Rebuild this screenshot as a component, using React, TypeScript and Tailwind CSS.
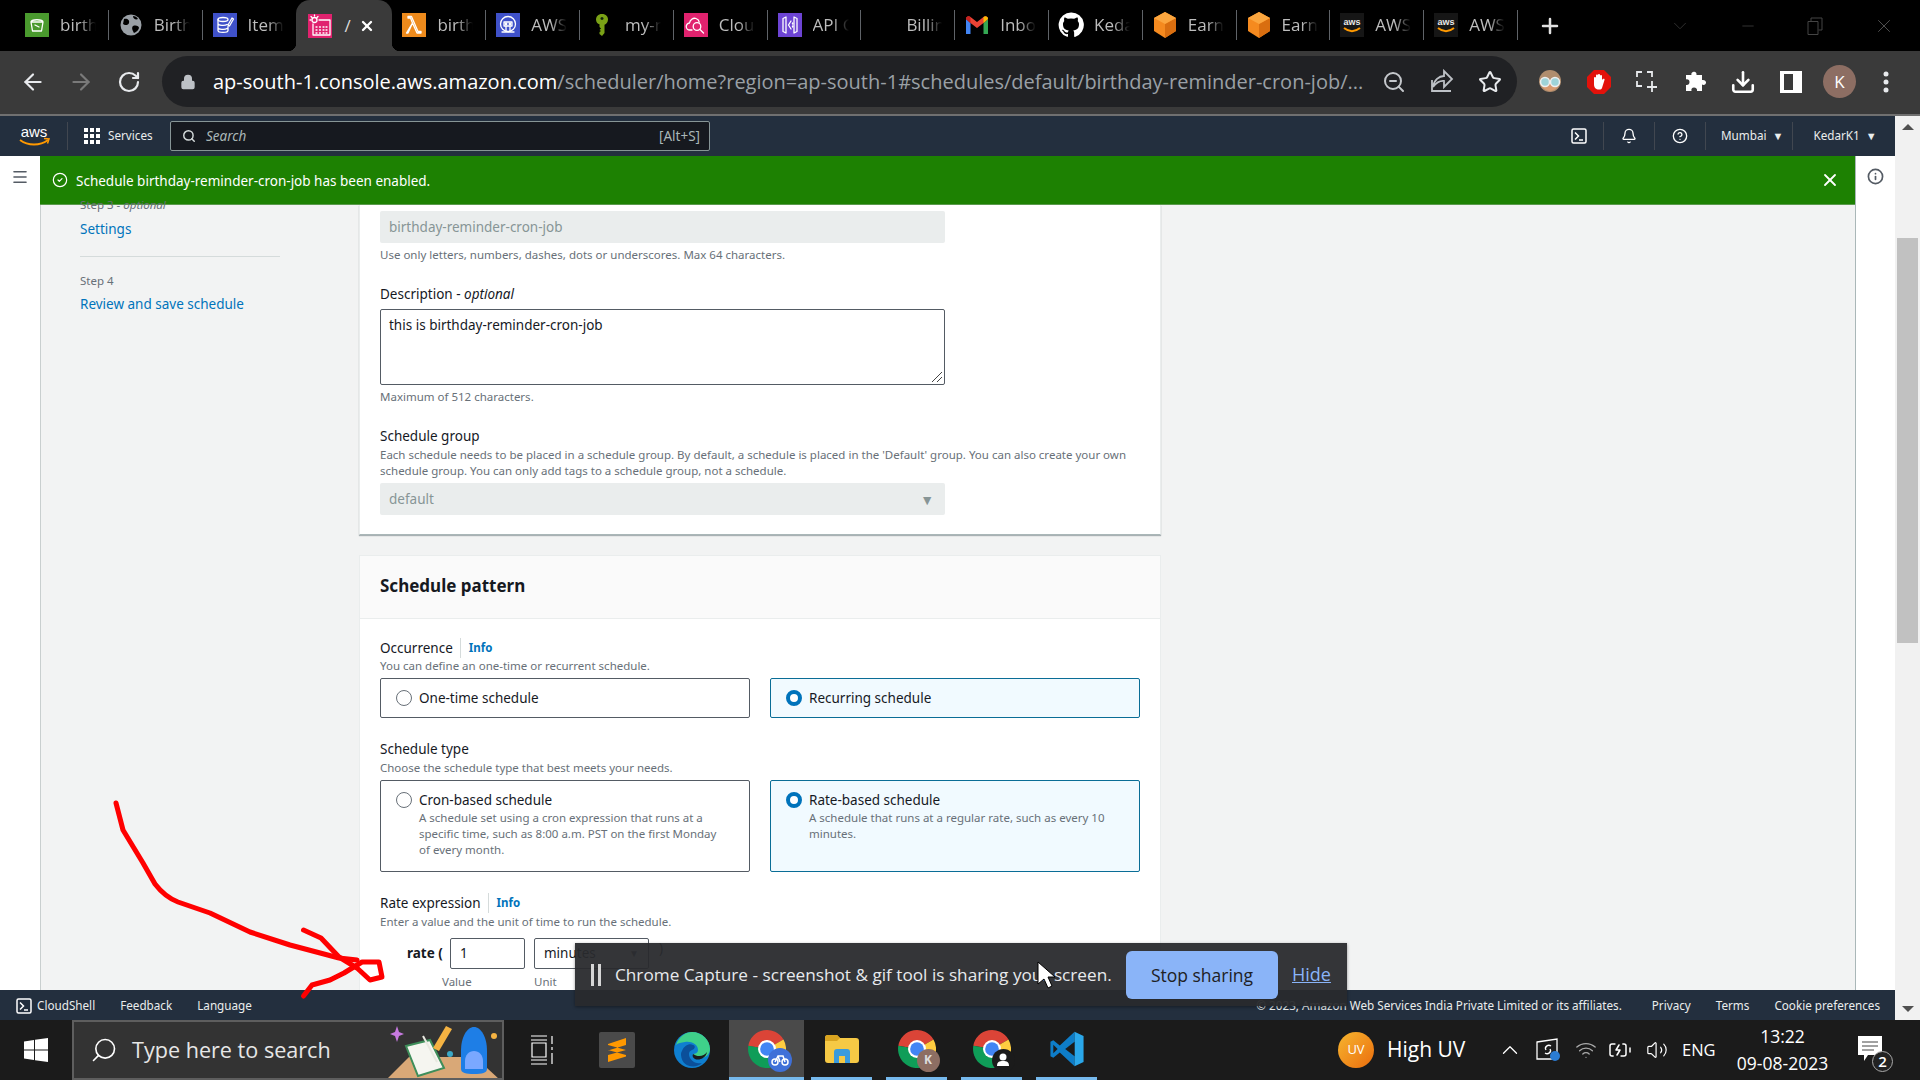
import React from "react";
import { ArrowLeft, ArrowRight, RotateCw, Lock, ZoomOut, Star, Download, X, Plus, ChevronDown, Minus, Search, Menu, CircleCheck, Info, Bell, CircleHelp, ChevronUp, Wifi, Volume2, BatteryCharging } from "lucide-react";

const CHROME = "font-['Open_Sans',sans-serif]";
const AWS = "font-['Noto_Sans',sans-serif]";

function Box({ bg, children }: { bg: string; children: React.ReactNode }) {
  return (
    <svg width="24" height="24" viewBox="0 0 24 24" className="shrink-0">
      <rect width="24" height="24" fill={bg} />
      <g fill="none" stroke="#fff" strokeWidth="1.3" strokeLinecap="round" strokeLinejoin="round">{children}</g>
    </svg>
  );
}

const S3 = () => (
  <Box bg="#4a9a2e">
    <path d="M6 9h12l-1.5 9h-9zM6 9c0-3 12-3 12 0M10 12l4 2" />
  </Box>
);
const Globe = () => (
  <svg width="24" height="24" viewBox="0 0 24 24" className="shrink-0">
    <circle cx="12" cy="12" r="10.5" fill="#9aa0a6" />
    <path d="M5 6c3-1 6 1 5 4s-5 2-6 1zM14 13c3-1 6 0 6 2-1 3-3 4-5 5-1-2-3-5-1-7zM14 3c2 0 4 1 5 3-2 1-5 0-5-3z" fill="#000" />
  </svg>
);
const Dynamo = () => (
  <Box bg="#3f51c9">
    <ellipse cx="10" cy="6.5" rx="5" ry="2" />
    <path d="M5 6.5v11c0 2.5 10 2.5 10 0v-4M5 10.5c0 2 7 2.500 9 1M5 14.500c0 2 7 2.500 9 1M15 12l4-7 1.500 1-4 7z" />
  </Box>
);
const EventB = () => (
  <Box bg="#e0226e">
    <circle cx="6.500" cy="6" r="2.500" />
    <path d="M6.500 1v1M2 6h1M3 2.500l1 1M10 2.500l-1 1M11 6h11v15H5v-11" />
    <path d="M8 13h1M11.500 13h1M15 13h1M18 13h1M8 16h1M11.500 16h1M15 16h1M18 16h1M8 19h1M11.500 19h1M15 19h1M18 19h1" />
  </Box>
);
const Lambda = () => (
  <Box bg="#ed8a1c">
    <path d="M4.500 20l6-10-2-5H6V3.500h3.500l6.500 15h3V20h-4l-4.500-10-4.500 10z" />
  </Box>
);
const AwsNet = () => (
  <Box bg="#3f51c9">
    <circle cx="12" cy="11" r="7.500" />
    <path d="M8 9h8v4H8zM10 13v5M14 13v5M6 19h12" />
    <circle cx="10" cy="11" r=".8" />
    <circle cx="14" cy="11" r=".8" />
  </Box>
);
const Key = () => (
  <svg width="24" height="24" viewBox="0 0 24 24" className="shrink-0">
    <path d="M12 1c4 0 6 2.500 6 5.500 0 2.500-1.500 4.500-3.500 5.200V20l-2.500 3-2.500-2v-2l1.500-1-1.500-1 1.500-1.500-1.500-1.500v-2.800C7.500 11 6 9 6 6.500 6 3.500 8 1 12 1z" fill="#7aa116" />
    <path d="M10.500 5.500h3M12 4v3" stroke="#10240a" strokeWidth="1.400" />
  </svg>
);
const Cloud = () => (
  <Box bg="#e0226e">
    <path d="M8 17H6a3.500 3.500 0 0 1-.5-7C6 7 9 4.500 12 5.500c2 .7 3 2 3.200 3.500" />
    <circle cx="13" cy="13.500" r="3.800" />
    <path d="M16 16.500l3.500 3.500" />
  </Box>
);
const Api = () => (
  <Box bg="#6d44d4">
    <path d="M5 5.500l3-1.500v16l-3-1.500zM19 5.500l-3-1.500v16l3-1.500zM13 8l-2.500 4 2.500 4M14.500 10v1M14.500 13v1" />
  </Box>
);
const Gmail = () => (
  <svg width="24" height="24" viewBox="0 0 24 24" className="shrink-0">
    <path d="M1 6v15h4.500V10z" fill="#4285f4" />
    <path d="M23 6v15h-4.500V10z" fill="#34a853" />
    <path d="M1 6c0-3 3-3.500 4.500-2L12 9l6.500-5c1.500-1.500 4.500-1 4.500 2l-4.500 4L12 15 5.500 10z" fill="#ea4335" />
    <path d="M18.500 4c1.500-1.500 4.500-1 4.500 2l-4.500 4z" fill="#fbbc04" />
    <path d="M1 6c0-3 3-3.500 4.500-2v6z" fill="#c5221f" />
  </svg>
);
const GitHub = () => (
  <svg width="26" height="26" viewBox="0 0 24 24" className="shrink-0" fill="#fff">
    <path d="M12 .5A11.500 11.500 0 0 0 8.400 22.900c.6.100.8-.2.800-.6v-2c-3.200.7-3.900-1.500-3.900-1.500-.5-1.300-1.300-1.700-1.300-1.700-1-.7.100-.7.100-.7 1.200.1 1.800 1.200 1.800 1.200 1 1.800 2.700 1.300 3.300 1 .1-.8.400-1.300.7-1.600-2.600-.3-5.300-1.300-5.300-5.700 0-1.300.5-2.300 1.200-3.100-.1-.3-.5-1.500.1-3.100 0 0 1-.3 3.200 1.200a11 11 0 0 1 5.800 0c2.200-1.500 3.200-1.200 3.200-1.200.6 1.600.2 2.800.1 3.100.7.800 1.200 1.800 1.200 3.100 0 4.400-2.700 5.400-5.300 5.700.4.400.8 1.100.8 2.200v3.200c0 .3.200.7.800.6A11.500 11.500 0 0 0 12 .5z" />
  </svg>
);
const Hex = () => (
  <svg width="24" height="26" viewBox="0 0 24 26" className="shrink-0">
    <path d="M12 0l11 6v13l-11 7-11-7V6z" fill="#f58a1f" />
    <path d="M12 12l11-6v13l-11 7z" fill="#d96e10" />
    <path d="M12 0l11 6-11 6L1 6z" fill="#fba63f" />
  </svg>
);
const AwsFav = () => (
  <svg width="24" height="24" viewBox="0 0 24 24" className="shrink-0">
    <rect width="24" height="24" fill="#161616" />
    <text x="12" y="12" textAnchor="middle" fontSize="9" fontWeight="700" fill="#e8e8e8" fontFamily="Liberation Sans">aws</text>
    <path d="M4 15c5 4 11 4 16 0" stroke="#f90" strokeWidth="2" fill="none" />
  </svg>
);

const tabs: { icon: React.ReactNode; t: string; active?: boolean }[] = [
  { icon: <S3 />, t: "birthday" },
  { icon: <Globe />, t: "Birthday" },
  { icon: <Dynamo />, t: "Items" },
  { icon: <EventB />, t: "Amazon", active: true },
  { icon: <Lambda />, t: "birthday" },
  { icon: <AwsNet />, t: "AWS" },
  { icon: <Key />, t: "my-new" },
  { icon: <Cloud />, t: "Cloud" },
  { icon: <Api />, t: "API G" },
  { icon: <span className="w-6 shrink-0" />, t: "Billing" },
  { icon: <Gmail />, t: "Inbox" },
  { icon: <GitHub />, t: "Kedar" },
  { icon: <Hex />, t: "Earn" },
  { icon: <Hex />, t: "Earn" },
  { icon: <AwsFav />, t: "AWS" },
  { icon: <AwsFav />, t: "AWS" },
];

function Tab({ icon, t, active, hideSep }: { icon: React.ReactNode; t: string; active?: boolean; hideSep?: boolean }) {
  if (active)
    return (
      <div className="relative flex h-full w-[96px] shrink-0 items-center rounded-t-[14px] bg-[#3a3a3a] pl-[12px]">
        <div className="absolute bottom-0 left-[-8px] h-[8px] w-[8px] bg-[radial-gradient(circle_at_0_0,transparent_8px,#3a3a3a_8.5px)]" />
        <div className="absolute bottom-0 right-[-8px] h-[8px] w-[8px] bg-[radial-gradient(circle_at_100%_0,transparent_8px,#3a3a3a_8.5px)]" />
        {icon}
        <span className="ml-[12px] w-[7px] overflow-hidden text-[17px] text-[#ddd]">/</span>
        <X size={16} strokeWidth={3.5} className="ml-[8px] text-white" />
      </div>
    );
  return (
    <div className="flex h-full w-[93.8px] shrink-0 items-center pb-[1px] pl-[9px]">
      <span className="flex w-[26px] justify-center">{icon}</span>
      <span className="ml-[10px] w-[36px] overflow-hidden whitespace-nowrap text-[17px] text-[#bdbdbd] [mask-image:linear-gradient(90deg,#000_55%,transparent)]">{t}</span>
      <span className={"ml-auto h-[30px] w-[1px] " + (hideSep ? "" : "bg-[#5f6368]")} />
    </div>
  );
}

function TabStrip() {
  return (
    <div className={"flex h-[51px] shrink-0 items-center bg-black pl-[15px] " + CHROME}>
      {tabs.map((x, i) => (
        <Tab key={i} {...x} hideSep={i === 2} />
      ))}
      <Plus size={24} strokeWidth={2.5} className="ml-[20px] text-[#e0e0e0]" />
      <ChevronDown size={22} strokeWidth={1} className="ml-[107px] text-[#333]" />
      <Minus size={18} strokeWidth={1} className="ml-[48px] text-[#444]" />
      <svg width="16" height="18" viewBox="0 0 16 18" className="ml-[50px]" fill="none" stroke="#444"><path d="M1 4.500h10v13H1zM4 4V1h11v12h-3.500" /></svg>
      <X size={22} strokeWidth={1} className="ml-[50px] text-[#555]" />
    </div>
  );
}

function Toolbar() {
  return (
    <div className={"flex h-[65px] shrink-0 items-center border-b-2 border-[#707070] bg-[#3a3a3a] pb-[2px] " + CHROME}>
      <ArrowLeft size={26} className="ml-[20px] text-[#e8eaed]" />
      <ArrowRight size={26} className="ml-[22px] text-[#7a7a7a]" />
      <RotateCw size={24} strokeWidth={2.2} className="ml-[23px] text-[#e8eaed]" />
      <div className="ml-[21px] flex h-[51px] w-[1355px] items-center rounded-[26px] bg-[#202124]">
        <Lock size={16} fill="#bdc1c6" className="ml-[18px] shrink-0 text-[#bdc1c6]" />
        <div className="ml-[17px] w-[1154px] overflow-hidden whitespace-nowrap pt-[1px] text-[20px] leading-[30px] text-[#9aa0a6]">
          <span className="text-white">ap-south-1.console.aws.amazon.com</span>/scheduler/home?region=ap-south-1#schedules/default/birthday-reminder-cron-job/...
        </div>
        <ZoomOut size={24} className="ml-[15px] shrink-0 text-[#c4c7cb]" />
        <svg width="24" height="26" viewBox="0 0 24 26" fill="none" stroke="#bdc1c6" strokeWidth="1.800" className="ml-[24px] shrink-0">
          <path d="M2 11v11h19M3 18c1-7 6-11 11-11V2l8 8-8 8v-6c-5-.5-8 2-11 6z" />
        </svg>
        <Star size={24} className="ml-[24px] shrink-0 text-[#e8eaed]" />
      </div>
      <svg width="26" height="26" viewBox="0 0 26 26" className="ml-[20px]">
        <circle cx="13" cy="12" r="11" fill="#b08d6d" />
        <path d="M4 15c2 9 16 9 18 0z" fill="#d89a70" />
        <circle cx="8" cy="13" r="4.500" fill="#9fd3d8" stroke="#eee" strokeWidth="1.500" />
        <circle cx="18" cy="13" r="4.500" fill="#9fd3d8" stroke="#eee" strokeWidth="1.500" />
      </svg>
      <svg width="26" height="26" viewBox="0 0 26 26" className="ml-[23px]">
        <path d="M8 1h10l7 7v10l-7 7H8l-7-7V8z" fill="#e3120b" />
        <path d="M8 15V9c0-1.500 2-1.500 2 0V6.500c0-1.500 2-1.500 2 0V6c0-1.500 2-1.500 2 0v1c0-1.500 2-1.500 2 0v4c1-2 3-1.500 2.500 0L16 19c-.5 1-1 1.500-3 1.500-3 0-5-1.500-5-5.500z" fill="#fff" />
      </svg>
      <svg width="22" height="22" viewBox="0 0 22 22" fill="none" stroke="#e8eaed" strokeWidth="1.800" className="ml-[24px]">
        <path d="M1 6V1h5M11 1h5v5M1 10v5h5M16 10v11M11 16h10" />
      </svg>
      <svg width="22" height="22" viewBox="0 0 22 22" fill="#fff" className="ml-[27px]">
        <path d="M8 1c2-1 4 .5 3.500 3H17v5c2.500-.5 4.500 1 4 3s-2.500 2.500-4 1.500V20h-5c.5-2-1-3.500-3-3.500S6 18 6.500 20H1v-6c2 .5 3.500-1 3.500-3S3 8 1 8.500V4h5.500C6 3 6.500 1.500 8 1z" />
      </svg>
      <Download size={26} strokeWidth={2.4} className="ml-[23px] text-white" />
      <svg width="22" height="22" viewBox="0 0 22 22" className="ml-[24px]">
        <path d="M0 0h22v22H0z" fill="#fff" />
        <path d="M4 3h9v16H4z" fill="#3a3a3a" />
      </svg>
      <div className="ml-[21px] flex h-[33px] w-[33px] items-center justify-center rounded-full bg-[#8d6e63] text-[17px] text-white">K</div>
      <svg width="6" height="22" viewBox="0 0 6 22" fill="#e8eaed" className="ml-[27px]">
        <circle cx="3" cy="3" r="2.500" /><circle cx="3" cy="11" r="2.500" /><circle cx="3" cy="19" r="2.500" />
      </svg>
    </div>
  );
}

function Divider() {
  return <span className="block h-[28px] w-[1px] bg-[#414750]" />;
}

function AwsNav() {
  return (
    <div className={"flex h-[40px] shrink-0 items-center bg-[#232f3e] text-[11.7px] text-[#eaeded] " + AWS}>
      <svg width="34" height="24" viewBox="0 0 34 24" className="ml-[17px]">
        <text x="17" y="13" textAnchor="middle" fontSize="15" fill="#fff" fontFamily="Liberation Sans">aws</text>
        <path d="M3 16c8 6 20 6 28 0" stroke="#f90" strokeWidth="2" fill="none" />
        <path d="M27 14.500l5 .5-1.500 4.500" stroke="#f90" strokeWidth="1.500" fill="none" />
      </svg>
      <span className="ml-[16px] h-[28px] w-[1px] bg-[#414750]" />
      <svg width="16" height="16" viewBox="0 0 16 16" fill="#fff" className="ml-[16px]">
        {[0, 6, 12].map((x) => [0, 6, 12].map((y) => <rect key={x + "-" + y} x={x} y={y} width="4" height="4" />))}
      </svg>
      <span className="ml-[8px] w-[62px]">Services</span>
      <div className="flex h-[30px] w-[540px] items-center rounded-[2px] border border-[#879596] bg-[#16191f] text-[13.5px]">
        <Search size={14} strokeWidth={2.5} className="ml-[11px] text-[#d5dbdb]" />
        <span className="ml-[10px] italic text-[#aab7b8]">Search</span>
        <span className="ml-auto pr-[9px] text-[#aab7b8]">[Alt+S]</span>
      </div>
      <svg width="16" height="16" viewBox="0 0 16 16" fill="none" stroke="#fff" strokeWidth="1.500" className="ml-[861px]">
        <rect x="1" y="1" width="14" height="14" rx="1.500" /><path d="M4 4.500L7.500 8 4 11.500M8 12h4" />
      </svg>
      <span className="ml-[16px]"><Divider /></span>
      <Bell size={16} strokeWidth={2} className="ml-[17px] text-white" />
      <span className="ml-[17px]"><Divider /></span>
      <CircleHelp size={16} strokeWidth={2} className="ml-[17px] text-white" />
      <span className="ml-[17px]"><Divider /></span>
      <span className="ml-[15px] whitespace-nowrap">Mumbai</span>
      <span className="ml-[6px] text-[11px]">▼</span>
      <span className="ml-[9px]"><Divider /></span>
      <span className="ml-[20px] whitespace-nowrap">KedarK1</span>
      <span className="ml-[6px] text-[11px]">▼</span>
    </div>
  );
}

function Banner() {
  return (
    <div className="flex h-[49px] shrink-0 items-center border-b border-[#5a9a4c] bg-[#1d8102] text-white">
      <CircleCheck size={16} strokeWidth={1.8} className="ml-[12px]" />
      <span className="ml-[8px] pt-[2px] text-[13.5px]">Schedule birthday-reminder-cron-job has been enabled.</span>
      <X size={20} strokeWidth={2.2} className="ml-auto mr-[15px]" />
    </div>
  );
}

function Hint({ children, className = "" }: { children: React.ReactNode; className?: string }) {
  return <div className={"text-[11.5px] leading-4 text-[#687078] " + className}>{children}</div>;
}

function Radio({ on }: { on?: boolean }) {
  return on ? (
    <span className="mt-[2px] h-[16px] w-[16px] shrink-0 rounded-full border-[4.500px] border-[#0073bb] bg-white" />
  ) : (
    <span className="mt-[2px] h-[16px] w-[16px] shrink-0 rounded-full border border-[#687078] bg-white" />
  );
}

function Card({ on, title, desc, tall }: { on?: boolean; title: string; desc?: string; tall?: boolean }) {
  return (
    <div className={"flex gap-[7px] rounded-[2px] border pl-[15px] pr-[20px] " + (tall ? "h-[92px] pt-[9px] " : "h-[40px] pt-[9px] ") + (on ? "border-[#0a6d96] bg-[#f1faff]" : "border-[#545b64] bg-white")}>
      <Radio on={on} />
      <div>
        <div className="text-[13.5px] leading-[20px] text-[#16191f]">{title}</div>
        {desc && <Hint>{desc}</Hint>}
      </div>
    </div>
  );
}

function Label({ text, info, em }: { text: string; info?: boolean; em?: string }) {
  return (
    <div className="flex h-[20px] items-center text-[13.5px] leading-[20px] text-[#16191f]">
      <span>{text}{em && <> - <i>{em}</i></>}</span>
      {info && <span className="ml-[7px] border-l border-[#d5dbdb] pl-[8px] text-[11.5px] font-bold text-[#0073bb]">Info</span>}
    </div>
  );
}

function Sidebar() {
  return (
    <div className="mt-[-8px] w-[318px] shrink-0 pl-[39px]">
      <div className="text-[11.5px] leading-4 text-[#687078]">Step 3 - <i>optional</i></div>
      <div className="mt-[6px] text-[13.5px] leading-[20px] text-[#0073bb]">Settings</div>
      <div className="mt-[17px] h-[1px] w-[200px] bg-[#d5dbdb]" />
      <div className="mt-[16px] text-[11.5px] leading-4 text-[#687078]">Step 4</div>
      <div className="mt-[5px] text-[13.5px] leading-[20px] text-[#0073bb]">Review and save schedule</div>
    </div>
  );
}

function Panels() {
  return (
    <div className="w-[802px] shrink-0">
      <div className="border border-t-0 border-[#eaeded] border-b-[#aab7b8] bg-white px-[20px] pb-[19px] pt-[6px] shadow-[0_1px_1px_rgba(0,28,36,0.3)]">
        <div className="flex h-[32px] w-[565px] items-center rounded-[2px] bg-[#eaeded] pl-[9px] text-[13.5px] text-[#879596]">birthday-reminder-cron-job</div>
        <Hint className="mt-[4px]">Use only letters, numbers, dashes, dots or underscores. Max 64 characters.</Hint>
        <div className="mt-[21px]"><Label text="Description" em="optional" /></div>
        <div className="relative mt-[5px] h-[76px] w-[565px] rounded-[2px] border border-[#545b64] pl-[8px] pt-[5px] text-[13.5px] leading-[20px] text-[#16191f]">
          this is birthday-reminder-cron-job
          <svg width="12" height="12" viewBox="0 0 12 12" className="absolute bottom-[1px] right-[1px]" stroke="#444" fill="none"><path d="M1 11L11 1M6 11l5-5" /></svg>
        </div>
        <Hint className="mt-[4px]">Maximum of 512 characters.</Hint>
        <div className="mt-[21px]"><Label text="Schedule group" /></div>
        <Hint className="mt-[1px] w-[760px]">Each schedule needs to be placed in a schedule group. By default, a schedule is placed in the 'Default' group. You can also create your own schedule group. You can only add tags to a schedule group, not a schedule.</Hint>
        <div className="mt-[4px] flex h-[32px] w-[565px] items-center justify-between rounded-[2px] bg-[#eaeded] pl-[9px] pr-[11px] text-[13.5px] text-[#879596]">
          default<span className="text-[14px] text-[#879596]">▼</span>
        </div>
      </div>
      <div className="mt-[20px] border border-[#eaeded] bg-white">
        <div className="flex h-[63px] items-center border-b border-[#eaeded] bg-[#fafafa] px-[20px] pb-[3px] text-[17px] font-bold text-[#16191f]">Schedule pattern</div>
        <div className="px-[20px] pt-[19px]">
          <Label text="Occurrence" info />
          <Hint>You can define an one-time or recurrent schedule.</Hint>
          <div className="mt-[4px] grid w-[760px] grid-cols-2 gap-[20px]">
            <Card title="One-time schedule" />
            <Card on title="Recurring schedule" />
          </div>
          <div className="mt-[21px]"><Label text="Schedule type" /></div>
          <Hint className="mt-[1px]">Choose the schedule type that best meets your needs.</Hint>
          <div className="mt-[4px] grid w-[760px] grid-cols-2 gap-[20px]">
            <Card tall title="Cron-based schedule" desc="A schedule set using a cron expression that runs at a specific time, such as 8:00 a.m. PST on the first Monday of every month." />
            <Card tall on title="Rate-based schedule" desc="A schedule that runs at a regular rate, such as every 10 minutes." />
          </div>
          <div className="mt-[21px]"><Label text="Rate expression" info /></div>
          <Hint className="mt-[1px]">Enter a value and the unit of time to run the schedule.</Hint>
          <div className="mt-[8px] flex h-[31px] items-center pl-[27px] text-[13.5px] text-[#16191f]">
            <b className="w-[43px]">rate (</b>
            <div className="flex h-[31px] w-[75px] items-center rounded-[2px] border border-[#545b64] pl-[9px]">1</div>
            <div className="ml-[9px] flex h-[31px] w-[115px] items-center justify-between rounded-[2px] border border-[#545b64] px-[9px]">minutes<span className="text-[10px] text-[#545b64]">▼</span></div>
            <span className="ml-[10px] self-start">)</span>
          </div>
          <div className="mt-[5px] flex pl-[62px] text-[11.5px] leading-4 text-[#687078]"><span className="w-[92px]">Value</span><span>Unit</span></div>
        </div>
      </div>
    </div>
  );
}

function Body() {
  return (
    <div className="flex min-h-0 flex-1">
      <div className="flex w-[40px] shrink-0 justify-center bg-white pt-[12px]">
        <Menu size={18} strokeWidth={2.2} className="text-[#545b64]" />
      </div>
      <div className="flex min-w-0 flex-1 flex-col overflow-hidden border-r border-[#aab7b8] bg-[#f2f3f3]">
        <Banner />
        <div className="flex min-h-0 flex-1 border-l border-[#c9cfcf]">
          <Sidebar />
          <Panels />
        </div>
      </div>
      <div className="flex w-[39px] shrink-0 justify-center bg-white pt-[12px]">
        <Info size={17} strokeWidth={2.4} className="text-[#545b64]" />
      </div>
    </div>
  );
}

function Footer() {
  return (
    <div className="flex h-[30px] shrink-0 items-center bg-[#232f3e] pt-[1px] text-[11.7px] text-[#eaeded]">
      <svg width="16" height="16" viewBox="0 0 16 16" fill="none" stroke="#fff" strokeWidth="1.500" className="ml-[16px]">
        <rect x="1" y="1" width="14" height="14" rx="1.500" /><path d="M4 4.500L7.500 8 4 11.500M8 12h4" />
      </svg>
      <span className="ml-[5px]">CloudShell</span>
      <span className="ml-[25px]">Feedback</span>
      <span className="ml-[25px]">Language</span>
      <span className="ml-auto whitespace-nowrap">© 2023, Amazon Web Services India Private Limited or its affiliates.</span>
      <span className="ml-[30px]">Privacy</span>
      <span className="ml-[25px]">Terms</span>
      <span className="ml-[25px] mr-[15px]">Cookie preferences</span>
    </div>
  );
}

function Scrollbar() {
  return (
    <div className="flex w-[25px] shrink-0 flex-col items-center bg-[#f1f1f1]">
      <span className="mt-[8px] h-0 w-0 border-x-[6px] border-b-[6px] border-x-transparent border-b-[#505050]" />
      <div className="mt-[108px] h-[405px] w-[21px] bg-[#c1c1c1]" />
      <span className="mb-[8px] mt-auto h-0 w-0 border-x-[6px] border-t-[6px] border-x-transparent border-t-[#505050]" />
    </div>
  );
}

function ChromeLogo({ children }: { children?: React.ReactNode }) {
  return (
    <div className="relative h-[38px] w-[38px]">
      <svg width="38" height="38" viewBox="0 0 36 36">
        <path d="M18 18L33.600 9A18 18 0 0 0 .3 14.900z" fill="#db4437" />
        <path d="M18 18L.3 14.900A18 18 0 0 0 24.200 34.900z" fill="#0f9d58" />
        <path d="M18 18L24.200 34.900A18 18 0 0 0 33.600 9z" fill="#ffcd40" />
        <circle cx="18" cy="18" r="8.500" fill="#fff" />
        <circle cx="18" cy="18" r="6.500" fill="#4285f4" />
      </svg>
      {children}
    </div>
  );
}

function Slot({ children, active, none }: { children: React.ReactNode; active?: boolean; none?: boolean }) {
  return (
    <div className={"flex h-full w-[75px] shrink-0 flex-col items-center " + (active ? "bg-[#4a4a4a]" : "")}>
      <div className="flex flex-1 items-center justify-center">{children}</div>
      {!none && <div className={"h-[3px] bg-[#76b9ed] " + (active ? "w-[75px]" : "w-[61px]")} />}
    </div>
  );
}

function Taskbar() {
  return (
    <div className={"flex h-[60px] shrink-0 items-center bg-[#1b1b1b] text-white " + CHROME}>
      <div className="flex w-[72px] shrink-0 justify-center">
        <svg width="24" height="24" viewBox="0 0 24 24" fill="#fff"><path d="M0 3.500l10-1.500v9.500H0zM11 1.800L24 0v11.500H11zM0 12.500h10V22L0 20.500zM11 12.500h13V24l-13-1.800z" /></svg>
      </div>
      <div className="flex h-[60px] w-[432px] shrink-0 items-center overflow-hidden border-2 border-[#5e5e5e] bg-[#333]">
        <Search size={28} strokeWidth={1.4} className="ml-[16px] -scale-x-100 text-white" />
        <span className="ml-[14px] pt-[1px] text-[21.6px] text-[#e6e6e6]">Type here to search</span>
        <svg width="118" height="58" viewBox="0 0 118 58" className="ml-auto shrink-0">
          <path d="M3 58l22-22h66l24 22z" fill="#d9a877" />
          <path d="M22 25l24-6 14 28-26 8z" fill="#f5f5f0" stroke="#3e8e5a" strokeWidth="2" />
          <path d="M39 15l14 26" stroke="#e8e8e0" strokeWidth="2" />
          <path d="M62 5l6 3-13 22-6-3z" fill="#f5b342" />
          <path d="M77 30c0-14 6-24 13-24s13 10 13 24v18c0 4-5 5-13 5s-13-1-13-5z" fill="#1e7ee6" />
          <path d="M81 40c0-6 4-10 9-10s9 4 9 10v8H81z" fill="#7aa8ff" />
          <circle cx="66" cy="33" r="3" fill="#3ba8c7" />
          <circle cx="110" cy="15" r="3" fill="#f5b342" />
          <path d="M13 5l2 6 5 2-5 2-2 6-2-6-5-2 5-2z" fill="#c77ae0" />
        </svg>
      </div>
      <Slot none>
        <svg width="24" height="30" viewBox="0 0 24 30" fill="none" stroke="#fff" strokeWidth="1.200">
          <path d="M1 1h16M1 5h16M2 8h14v14H2zM1 25h16M1 29h16M22 1v8M22 12v3M22 18v11" />
        </svg>
      </Slot>
      <Slot none>
        <div className="flex h-[36px] w-[36px] items-center justify-center rounded-[2px] bg-[#4a4a4a]">
          <svg width="20" height="26" viewBox="0 0 20 26" fill="#ff9800"><path d="M19 1v7L1 13.500V7zM1 13l18 5v-5L1 8zM19 13v6.500L1 25v-7z" /></svg>
        </div>
      </Slot>
      <Slot none>
        <svg width="36" height="36" viewBox="0 0 36 36">
          <circle cx="18" cy="18" r="18" fill="#0f7fd0" />
          <path d="M2 13C5 4 12 0 18 0c10 0 18 8 18 17 0 5-4 9-10 9-4 0-7-2-7-4 2 0 5-1 5-4 0-6-7-9-13-8-4 .7-7 1-9 3z" fill="#3fd08a" />
          <path d="M8 19c2-6 8-8 11-6 3 1 2 4-1 5-3 1-4 4-2 8 3 5 9 6 12 5-6 6-20 5-21-8 0-1 0-3 1-4z" fill="#0b4f9a" />
          <path d="M19 22c4 3 11 3 14-2-1 6-8 9-12 7-2-1-3-3-2-5z" fill="#1b1b1b" />
        </svg>
      </Slot>
      <Slot active>
        <ChromeLogo>
          <div className="absolute bottom-[-4px] right-[-6px] flex h-[24px] w-[24px] items-center justify-center rounded-full bg-[#3f70d8]">
            <svg width="18" height="12" viewBox="0 0 18 12" fill="none" stroke="#fff" strokeWidth="1.500"><circle cx="4" cy="8" r="3" /><circle cx="14" cy="8" r="3" /><path d="M4 8l3-6h5l2 6M7 2l2 6" /></svg>
          </div>
        </ChromeLogo>
      </Slot>
      <Slot>
        <svg width="34" height="28" viewBox="0 0 34 28">
          <path d="M0 3c0-2 1-3 3-3h9l3 3h16c2 0 3 1 3 3v19c0 2-1 3-3 3H3c-2 0-3-1-3-3z" fill="#f6c945" />
          <path d="M0 3c0-2 1-3 3-3h9l3 3-3 3H0z" fill="#d9a420" />
          <path d="M9 28V17c0-2 1-3 3-3h10c2 0 3 1 3 3v11h-5v-7h-6v7z" fill="#3a9bdc" />
        </svg>
      </Slot>
      <Slot>
        <ChromeLogo>
          <div className="absolute bottom-[-4px] right-[-4px] flex h-[23px] w-[23px] items-center justify-center rounded-full bg-[#8d6e63] text-[12px] font-bold text-[#ddd]">K</div>
        </ChromeLogo>
      </Slot>
      <Slot>
        <ChromeLogo>
          <div className="absolute bottom-[-4px] right-[-4px] flex h-[23px] w-[23px] items-center justify-center rounded-full bg-[#1b1b1b]">
            <svg width="14" height="14" viewBox="0 0 14 14" fill="#fff"><circle cx="7" cy="4" r="3.500" /><path d="M1 13c0-4 2-5 6-5s6 1 6 5z" /></svg>
          </div>
        </ChromeLogo>
      </Slot>
      <Slot>
        <svg width="36" height="36" viewBox="0 0 100 100">
          <path d="M71 2L30 40 12 26 4 30v40l8 4 18-14 41 38z" fill="#0e7dc8" />
          <path d="M71 2l25 12v72L71 98z" fill="#2aa7ea" />
          <path d="M71 30L45 50l26 20z" fill="#1b1b1b" />
          <path d="M12 38v24l12-12z" fill="#1b1b1b" />
        </svg>
      </Slot>
      <div className="flex-1" />
      <div className="flex h-[36px] w-[36px] shrink-0 items-center justify-center rounded-full bg-gradient-to-br from-[#f5b52e] to-[#ea6c0c] text-[13px] text-white">UV</div>
      <span className="ml-[13px] w-[76px] whitespace-nowrap text-[21px]">High UV</span>
      <ChevronUp size={26} strokeWidth={1.2} className="ml-[34px]" />
      <svg width="24" height="24" viewBox="0 0 24 24" fill="none" stroke="#fff" strokeWidth="1.300" className="ml-[13px]">
        <path d="M1 4l20-3v20L1 21zM15 8c-3-2-7 1-5 4M9 15c3 2 7-1 5-4" />
        <circle cx="19" cy="18" r="5" fill="#2b7cd3" stroke="none" />
      </svg>
      <Wifi size={22} strokeWidth={1.4} className="ml-[15px] text-[#aaa]" />
      <BatteryCharging size={24} strokeWidth={1.5} className="ml-[11px]" />
      <Volume2 size={22} strokeWidth={1.3} className="ml-[14px]" />
      <span className="ml-[14px] w-[36px] whitespace-nowrap text-[16.5px]">ENG</span>
      <div className="ml-[18px] w-[93px] whitespace-nowrap text-center text-[17.5px] leading-[27px]">
        <div>13:22</div>
        <div>09-08-2023</div>
      </div>
      <div className="relative ml-[29px] mr-[38px] h-[28px] w-[24px]">
        <svg width="24" height="26" viewBox="0 0 24 26" fill="#fff"><path d="M0 0h24v19H10l-4 6v-6H0z" /><path d="M4 6h16M4 10h16M4 14h12" stroke="#444" /></svg>
        <div className="absolute bottom-[-8px] right-[-11px] flex h-[21px] w-[21px] items-center justify-center rounded-full border border-[#aaa] bg-[#222] text-[15px] font-semibold">2</div>
      </div>
    </div>
  );
}

function ShareBar() {
  return (
    <div className={"absolute left-[575px] top-[943px] flex h-[63px] w-[772px] items-center bg-[#292a2d]/95 shadow-[0_1px_3px_rgba(0,0,0,.4)] " + CHROME}>
      <span className="ml-[16px] h-[22px] w-[3px] bg-[#d6d6d6]" />
      <span className="ml-[4px] h-[22px] w-[3px] bg-[#d6d6d6]" />
      <span className="ml-[14px] whitespace-nowrap text-[17.2px] text-[#e8eaed]">Chrome Capture - screenshot &amp; gif tool is sharing your screen.</span>
      <button className="absolute left-[551px] top-[8px] h-[48px] w-[152px] rounded-[6px] bg-[#8ab4f8] text-[17.5px] text-[#202124]">Stop sharing</button>
      <span className="absolute left-[717px] top-[18px] text-[18px] text-[#8ab4f8] underline">Hide</span>
    </div>
  );
}

export default function App() {
  return (
    <div className="relative flex h-screen w-full flex-col overflow-hidden bg-white">
      <TabStrip />
      <Toolbar />
      <div className={"flex min-h-0 flex-1 " + AWS}>
        <div className="flex min-w-0 flex-1 flex-col">
          <AwsNav />
          <Body />
          <Footer />
        </div>
        <Scrollbar />
      </div>
      <Taskbar />
      <ShareBar />
      <svg width="400" height="220" viewBox="0 780 400 220" className="pointer-events-none absolute left-0 top-[780px]" fill="none" stroke="#ff0000" strokeWidth="5" strokeLinecap="round" strokeLinejoin="round">
        <path d="M116 803L123 830L143 863L155 884Q165 897 178 902L210 913L250 932L290 945L339 958L357 960" />
        <path d="M303.500 930L321 938L339 957L357 968L370 980L382 977L379 962L362 962L344 973L330 980L312 985L303.500 996" />
      </svg>
      <svg width="24" height="30" viewBox="0 0 24 30" className="pointer-events-none absolute left-[1037px] top-[961px]">
        <path d="M1 1v22l6-5 4 9 4-2-4-9h7z" fill="#fff" stroke="#000" />
      </svg>
    </div>
  );
}
